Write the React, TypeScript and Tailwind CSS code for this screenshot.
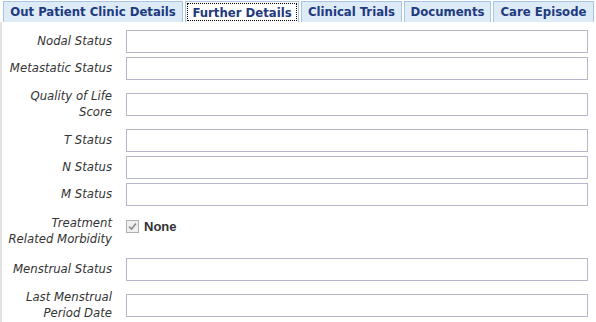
import React from 'react';

const tabs: [string, number][] = [
  ['Out Patient Clinic Details', 180],
  ['Further Details', 114],
  ['Clinical Trials', 101],
  ['Documents', 87],
  ['Care Episode', 101],
];

const font = { fontFamily: '"DejaVu Sans Condensed", "DejaVu Sans", Verdana, sans-serif' };

function Row({ label, tall, children }: { label: React.ReactNode; tall?: boolean; children?: React.ReactNode }) {
  return (
    <div className="flex items-center">
      <div
        className={`w-[110px] shrink-0 text-right italic text-[13px] leading-4 text-[#333] ${tall ? 'py-[5px]' : 'py-1'}`}
      >
        {label}
      </div>
      <div className="ml-[14px] flex-1">
        {children ?? <div className="h-[23px] w-[462px] border border-[#b8b8cc] bg-white" />}
      </div>
    </div>
  );
}

export default function App() {
  return (
    <div className="w-[596px] h-[322px] bg-white overflow-hidden" style={font}>
      {/* Tabs */}
      <div className="flex h-[22px] items-end gap-[2px] pl-[3px] pt-[1px]">
        {tabs.map(([t, w], i) =>
          i === 1 ? (
            <div key={t} className="h-[21px] shrink-0 bg-white border border-[#a9c5e3] border-b-0 p-[1px]" style={{ width: w }}>
              <div className="h-full border border-dotted border-black text-center whitespace-nowrap text-[13px] font-bold leading-[17px] text-[#1f3a80]">
                {t}
              </div>
            </div>
          ) : (
            <div
              key={t}
              className="h-[21px] shrink-0 bg-[#dcebf6] border border-[#a9c5e3] border-b-0 text-center whitespace-nowrap text-[13px] font-bold leading-[20px] text-[#1f3a80]"
              style={{ width: w }}
            >
              {t}
            </div>
          ),
        )}
      </div>

      {/* Form */}
      <div className="h-[300px] border-l-2 border-[#e2e2e2] flex flex-col gap-[3px] pt-[7px]">
        <Row label="Nodal Status" />
        <Row label="Metastatic Status" />
        <Row tall label={<>Quality of Life<br />Score</>} />
        <Row label="T Status" />
        <Row label="N Status" />
        <Row label="M Status" />
        <div className="flex items-start">
          <div className="w-[110px] shrink-0 text-right italic text-[13px] leading-4 text-[#333] pt-[6px] pb-[7px]">
            Treatment<br />Related Morbidity
          </div>
          <div className="ml-[14px] flex items-center gap-[5px] pt-[8px]">
            <div className="w-[13px] h-[13px] border border-[#b0b0b0] bg-[#f0f0f0] flex items-center justify-center">
              <svg width="11" height="11" viewBox="0 0 11 11">
                <path d="M2 5.5 L4.5 8 L9 2.5" fill="none" stroke="#8a8a8a" strokeWidth="1.6" />
              </svg>
            </div>
            <span className="text-[13px] font-bold text-[#333]" style={{ fontFamily: '"Liberation Sans", Arial, sans-serif' }}>
              None
            </span>
          </div>
        </div>
        <Row label="Menstrual Status" />
        <Row tall label={<>Last Menstrual<br />Period Date</>} />
      </div>
    </div>
  );
}
